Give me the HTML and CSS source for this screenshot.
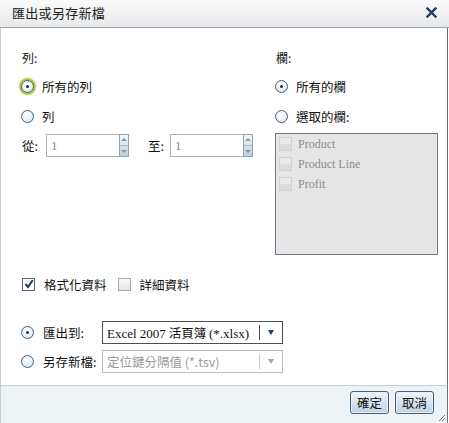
FILE: index.html
```html
<!DOCTYPE html>
<html lang="zh-Hant">
<head>
<meta charset="utf-8">
<title>匯出或另存新檔</title>
<link rel="stylesheet" href="styles.css">
</head>
<body>
<div class="dialog">
  <div class="titlebar">
    <span class="title">匯出或另存新檔</span>
    <span class="close">
      <svg width="11" height="11" viewBox="0 0 11 11"><path d="M1.5 1.5 L9.5 9.5 M9.5 1.5 L1.5 9.5" stroke="#1f3c66" stroke-width="2.4" stroke-linecap="square"/></svg>
    </span>
  </div>
  <div class="content">
    <div class="columns">
      <div class="col left">
        <div class="col-label">列:</div>
        <div class="radio-row first"><span class="radio checked focus"></span><span class="lbl">所有的列</span></div>
        <div class="radio-row second"><span class="radio"></span><span class="lbl">列</span></div>
        <div class="spin-row">
          <span class="spin-lbl">從:</span>
          <span class="spin"><span class="spin-input">1</span><span class="spin-btns"><span class="up"></span><span class="down"></span></span></span>
          <span class="spin-lbl to">至:</span>
          <span class="spin"><span class="spin-input">1</span><span class="spin-btns"><span class="up"></span><span class="down"></span></span></span>
        </div>
      </div>
      <div class="col right">
        <div class="col-label">欄:</div>
        <div class="radio-row first"><span class="radio checked"></span><span class="lbl">所有的欄</span></div>
        <div class="radio-row second"><span class="radio"></span><span class="lbl">選取的欄:</span></div>
        <div class="listbox">
          <div class="item"><span class="cb-dis"></span>Product</div>
          <div class="item"><span class="cb-dis"></span>Product Line</div>
          <div class="item"><span class="cb-dis"></span>Profit</div>
        </div>
      </div>
    </div>
    <div class="check-row">
      <span class="cb checked"><svg width="10" height="10" viewBox="0 0 10 10"><path d="M1.5 5 L4 8 L8.8 1.2" fill="none" stroke="#1c3d6e" stroke-width="2"/></svg></span>
      <span class="lbl">格式化資料</span>
      <span class="cb plain"></span>
      <span class="lbl">詳細資料</span>
    </div>
    <div class="out-row export">
      <span class="radio checked"></span><span class="out-lbl">匯出到:</span>
      <div class="select"><span class="sel-text"><span class="latin">Excel 2007</span> 活頁簿 <span class="latin">(*.xlsx)</span></span><span class="sel-arrow"></span></div>
    </div>
    <div class="out-row save">
      <span class="radio"></span><span class="out-lbl">另存新檔:</span>
      <div class="select disabled"><span class="sel-text">定位鍵分隔值 (*.tsv)</span><span class="sel-arrow"></span></div>
    </div>
  </div>
  <div class="footer">
    <button class="btn">確定</button>
    <button class="btn">取消</button>
    <svg class="grip" width="8" height="8" viewBox="0 0 8 8"><path d="M7 1 L1 7 M7 4 L4 7" stroke="#777" stroke-width="1"/></svg>
  </div>
</div>
</body>
</html>
```
FILE: styles.css
```css
html, body {
  margin: 0;
  padding: 0;
  background: #ffffff;
}
body {
  font-family: "Noto Sans CJK TC", "Noto Sans", sans-serif;
  font-size: 12px;
  color: #111;
}
.dialog {
  width: 449px;
  height: 423px;
  display: flex;
  flex-direction: column;
  box-sizing: border-box;
}
.titlebar {
  height: 28px;
  box-sizing: border-box;
  display: flex;
  align-items: center;
  justify-content: space-between;
  padding: 0 12px 2px 12px;
  background: linear-gradient(#fbfbfb, #e6e8ea);
  border-bottom: 1px solid #9ca3aa;
}
.title {
  font-size: 13px;
  color: #222;
  letter-spacing: 0.3px;
}
.close {
  display: flex;
}
.content {
  flex: 1;
  margin-right: 1px;
  border-left: 1px solid #c7d0d6;
  border-right: 1px solid #6d6f72;
  padding-left: 20px;
  display: flex;
  flex-direction: column;
}
.columns {
  display: flex;
}
.col.left {
  width: 254px;
}
.col.right {
  width: 162px;
}
.col-label {
  height: 20px;
  line-height: 20px;
  margin-top: 20px;
  padding-left: 1px;
}
.radio-row {
  height: 20px;
  display: flex;
  align-items: center;
}
.radio-row.first { margin-top: 8px; }
.radio-row.second { margin-top: 10px; }
.radio-row .lbl {
  margin-left: 8px;
  font-size: 12.5px;
}
.radio {
  width: 13px;
  height: 13px;
  box-sizing: border-box;
  border-radius: 50%;
  border: 1px solid #3f5f80;
  background: radial-gradient(circle at 45% 35%, #ffffff 0%, #eef4f9 45%, #c9dae8 100%);
  position: relative;
  flex: none;
}
.radio.checked::after {
  content: "";
  position: absolute;
  left: 4px;
  top: 4px;
  width: 3px;
  height: 3px;
  border-radius: 50%;
  background: #2a2a2a;
}
.radio.focus {
  box-shadow: 0 0 0 1.5px #b4c23a, 0 0 0 2.5px #d9e07a;
}
.spin-row {
  margin-top: 8px;
  height: 23px;
  display: flex;
  align-items: center;
}
.spin-lbl {
  width: 24px;
  padding-left: 1px;
  font-size: 12.5px;
}
.spin-lbl.to {
  width: 22px;
  margin-left: 18px;
}
.spin {
  display: flex;
  height: 23px;
}
.spin-input {
  width: 73px;
  box-sizing: border-box;
  border: 1px solid #aab3bc;
  border-right: none;
  font-family: "Liberation Serif", serif;
  font-size: 13px;
  color: #8a8a8a;
  padding-left: 4px;
  line-height: 21px;
}
.spin-btns {
  width: 10px;
  box-sizing: border-box;
  border: 1px solid #8fa4b8;
  display: flex;
  flex-direction: column;
}
.spin-btns .up, .spin-btns .down {
  flex: 1;
  position: relative;
}
.spin-btns .up {
  background: linear-gradient(#f4f7fa, #dce6ee);
  border-bottom: 1px solid #aabccc;
}
.spin-btns .down {
  background: linear-gradient(#d4e2ed, #bcd0e0);
}
.spin-btns .up::after, .spin-btns .down::after {
  content: "";
  position: absolute;
  left: 1px;
  top: 3px;
  border-left: 3px solid transparent;
  border-right: 3px solid transparent;
}
.spin-btns .up::after { border-bottom: 3px solid #8a96a2; }
.spin-btns .down::after { border-top: 3px solid #8a96a2; top: 4px; }
.listbox {
  margin-top: 7px;
  width: 163px;
  height: 122px;
  box-sizing: border-box;
  background: #e6e6e6;
  border: 1px solid #6e7586;
  padding-top: 0;
}
.item {
  height: 20px;
  display: flex;
  align-items: center;
  font-family: "Liberation Serif", serif;
  font-size: 12px;
  color: #8c8c8c;
}
.cb-dis {
  width: 13px;
  height: 14px;
  box-sizing: border-box;
  border: 1px solid #d0d0d0;
  background: linear-gradient(#e9e9e9 50%, #dcdcdc 50%);
  margin-left: 3px;
  margin-right: 6px;
}
.check-row {
  margin-top: 18px;
  height: 22px;
  display: flex;
  align-items: center;
}
.check-row .lbl {
  font-size: 12.5px;
  margin-left: 9px;
}
.cb {
  width: 13px;
  height: 13px;
  box-sizing: border-box;
  flex: none;
  display: flex;
  align-items: center;
  justify-content: center;
}
.cb.checked {
  border: 1px solid #4d6888;
  background: #fff;
  margin-left: 1px;
}
.cb.plain {
  border: 1px solid #a4a8ac;
  background: linear-gradient(#fbfbfb, #e4e4e4);
  margin-left: 11px;
}
.out-row {
  height: 23px;
  display: flex;
  align-items: center;
}
.out-row.export { margin-top: 26px; }
.out-row.save { margin-top: 6px; }
.out-lbl {
  width: 59px;
  margin-left: 9px;
  font-size: 12.5px;
}
.select {
  width: 181px;
  height: 23px;
  box-sizing: border-box;
  border: 1px solid #4b4f55;
  display: flex;
  align-items: center;
  position: relative;
}
.sel-text {
  flex: 1;
  padding-left: 4px;
  font-size: 12.5px;
  white-space: nowrap;
}
.latin {
  font-family: "Liberation Serif", serif;
  font-size: 13px;
}
.sel-arrow {
  width: 22px;
  height: 15px;
  border-left: 1px solid #4b4f55;
  position: relative;
}
.sel-arrow::after {
  content: "";
  position: absolute;
  left: 8px;
  top: 5px;
  border-left: 3.5px solid transparent;
  border-right: 3.5px solid transparent;
  border-top: 5px solid #1f3f6a;
}
.select.disabled {
  border-color: #b9bcbf;
  color: #9a9a9a;
}
.select.disabled .sel-arrow {
  border-left-color: #c4c6c8;
}
.select.disabled .sel-arrow::after {
  border-top-color: #a0a4a8;
}
.footer {
  height: 38px;
  box-sizing: border-box;
  background: #eef3f6;
  border-top: 1px solid #c6ced4;
  border-left: 1px solid #c7d0d6;
  margin-right: 1px;
  border-right: 1px solid #6d6f72;
  display: flex;
  justify-content: flex-end;
  align-items: flex-start;
  padding: 5px 13px 0 0;
  gap: 6px;
  position: relative;
}
.btn {
  height: 23px;
  padding: 0 6px;
  box-sizing: border-box;
  border: 1px solid #43607e;
  border-radius: 3px;
  background: linear-gradient(#f2f7fb, #d0e0ec 60%, #bfd3e3);
  font-family: "Noto Sans CJK TC", sans-serif;
  font-size: 12.5px;
  color: #111;
  box-shadow: inset 0 0 0 1px #e8f0f6;
}
.grip {
  position: absolute;
  right: 1px;
  bottom: 1px;
}
```
